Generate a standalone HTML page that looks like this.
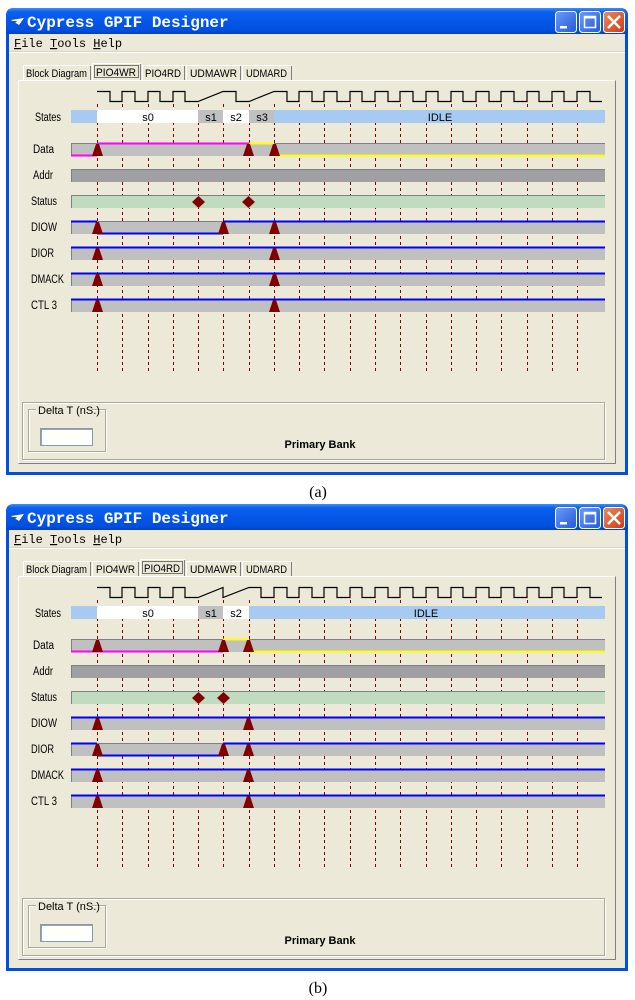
<!DOCTYPE html>
<html><head><meta charset="utf-8"><style>
html,body{margin:0;padding:0;background:#fff;}
svg{display:block;}
.t{font-family:"Liberation Sans",sans-serif;font-size:11px;fill:#000;}
.l{font-family:"Liberation Sans",sans-serif;font-size:11.5px;fill:#000;}
.m{font-family:"Liberation Mono",monospace;font-size:12px;fill:#000;}
.ti{font-family:"Liberation Mono",monospace;font-size:16px;font-weight:bold;fill:#fff;}
.cap{font-family:"Liberation Serif",serif;font-size:16px;fill:#000;}
</style></head><body>
<svg width="635" height="1000" viewBox="0 0 635 1000" xmlns="http://www.w3.org/2000/svg">
<defs>
<linearGradient id="tg" x1="0" y1="0" x2="0" y2="1">
<stop offset="0" stop-color="#3d8ef8"/><stop offset="0.15" stop-color="#0a5fee"/><stop offset="0.85" stop-color="#0050e0"/><stop offset="1" stop-color="#0040c8"/></linearGradient>
<linearGradient id="bg" x1="0" y1="0" x2="1" y2="1"><stop offset="0" stop-color="#6a9cf6"/><stop offset="1" stop-color="#2358d8"/></linearGradient>
<linearGradient id="rg" x1="0" y1="0" x2="1" y2="1"><stop offset="0" stop-color="#f08a60"/><stop offset="1" stop-color="#c83a14"/></linearGradient>
<g id="chrome">
<path d="M6,16 Q6,8 14,8 H620 Q628,8 628,16 V475 H6 Z" fill="#0050e0"/>
<path d="M6,16 Q6,8 14,8 H620 Q628,8 628,16 V34 H6 Z" fill="url(#tg)"/>
<rect x="9" y="34" width="616" height="438" fill="#ece9d8"/>
<path d="M11,20 L24,18 L19,25 Z" fill="#fff"/><path d="M12,21 L17,21 L15,23 Z" fill="#2050c0"/>
<rect x="555.5" y="11.5" width="21" height="21" rx="3" fill="url(#bg)" stroke="#fff"/>
<rect x="560" y="26" width="7" height="2.5" fill="#fff"/>
<rect x="579.5" y="11.5" width="21" height="21" rx="3" fill="url(#bg)" stroke="#fff"/>
<rect x="584.5" y="16.5" width="11" height="11" fill="none" stroke="#fff" stroke-width="1.5"/><rect x="584" y="16" width="12" height="2.5" fill="#fff"/>
<rect x="603.5" y="11.5" width="21" height="21" rx="3" fill="url(#rg)" stroke="#fff"/>
<path d="M608,16 L620,28 M620,16 L608,28" stroke="#fff" stroke-width="2.5"/>
<line x1="9" y1="52.5" x2="625" y2="52.5" stroke="#fff"/>
<line x1="9" y1="51.5" x2="625" y2="51.5" stroke="#d8d4c4"/>
<path d="M18.5,463.5 V80.5 H615.5" fill="none" stroke="#fff"/>
<path d="M615.5,80.5 V463.5 H18.5" fill="none" stroke="#808080"/>
<g stroke="#800000" stroke-dasharray="3,3" stroke-width="1">
<path d="M97.5,104V372 M122.5,104V372 M148.5,104V372 M173.5,104V372 M198.5,104V372 M223.5,104V372 M249.5,104V372 M274.5,104V372 M299.5,104V372 M324.5,104V372 M350.5,104V372 M375.5,104V372 M400.5,104V372 M426.5,104V372 M451.5,104V372 M476.5,104V372 M501.5,104V372 M527.5,104V372 M552.5,104V372 M577.5,104V372"/>
</g>
<g>
<rect x="71" y="143" width="534" height="13" fill="#c0c0c0"/>
<rect x="71" y="169" width="534" height="13" fill="#a0a0a4"/>
<rect x="71" y="195" width="534" height="13" fill="#c0dcc0"/>
<rect x="71" y="221" width="534" height="13" fill="#c0c0c0"/>
<rect x="71" y="247" width="534" height="13" fill="#c0c0c0"/>
<rect x="71" y="273" width="534" height="13" fill="#c0c0c0"/>
<rect x="71" y="299" width="534" height="13" fill="#c0c0c0"/>
<path d="M71.5,156V143.5H605 M71.5,182V169.5H605 M71.5,208V195.5H605 M71.5,234V221.5H605 M71.5,260V247.5H605 M71.5,286V273.5H605 M71.5,312V299.5H605" fill="none" stroke="#808080"/>
</g>
<rect x="23.5" y="403.5" width="582" height="57" fill="none" stroke="#fff"/>
<rect x="22.5" y="402.5" width="582" height="57" fill="none" stroke="#aca899"/>
<rect x="29.5" y="410.5" width="77" height="42" fill="none" stroke="#fff"/>
<rect x="28.5" y="409.5" width="77" height="42" fill="none" stroke="#aca899"/>
<rect x="36" y="405" width="56" height="12" fill="#ece9d8"/>
<rect x="40.5" y="428.5" width="52" height="17" fill="#fff" stroke="#7f9db9"/>
<path d="M41.5,445V429.5H92" fill="none" stroke="#a0a0a0"/>
</g>
</defs>

<!-- ================= (a) ================= -->
<use href="#chrome"/>
<text class="ti" x="27" y="27">Cypress GPIF Designer</text>
<text class="m" x="14" y="47"><tspan text-decoration="underline">F</tspan>ile  <tspan text-decoration="underline">T</tspan>ools  <tspan text-decoration="underline">H</tspan>elp</text>
<path d="M23.5,80V65.5H90.5V80" fill="#ece9d8" stroke="#fff"/><line x1="90.5" y1="66" x2="90.5" y2="80" stroke="#808080"/>
<path d="M92.5,80V63.5H140.5V80" fill="#ece9d8" stroke="#fff"/><line x1="140.5" y1="64" x2="140.5" y2="80" stroke="#808080"/>
<rect x="94.5" y="65.5" width="44" height="12" fill="none" stroke="#000" stroke-dasharray="1,1"/>
<path d="M142.5,80V65.5H184.5V80" fill="#ece9d8" stroke="#fff"/><line x1="184.5" y1="66" x2="184.5" y2="80" stroke="#808080"/>
<path d="M186.5,80V65.5H240.5V80" fill="#ece9d8" stroke="#fff"/><line x1="240.5" y1="66" x2="240.5" y2="80" stroke="#808080"/>
<path d="M242.5,80V65.5H291.5V80" fill="#ece9d8" stroke="#fff"/><line x1="291.5" y1="66" x2="291.5" y2="80" stroke="#808080"/>
<text class="t" x="26" y="77" textLength="61" lengthAdjust="spacingAndGlyphs">Block Diagram</text><text class="t" x="96" y="76" textLength="40" lengthAdjust="spacingAndGlyphs">PIO4WR</text><text class="t" x="145" y="77" textLength="36" lengthAdjust="spacingAndGlyphs">PIO4RD</text><text class="t" x="190" y="77" textLength="47" lengthAdjust="spacingAndGlyphs">UDMAWR</text><text class="t" x="246" y="77" textLength="41" lengthAdjust="spacingAndGlyphs">UDMARD</text>
<path d="M97,91.5 H110 V101.5 H122 V91.5 H135 V101.5 H148 V91.5 H160 V101.5 H173 V91.5 H185 V101.5 H198 L223,91.5 H236 V101.5 H249 L274,91.5 H287 V101.5 H299 V91.5 H312 V101.5 H324 V91.5 H337 V101.5 H350 V91.5 H362 V101.5 H375 V91.5 H388 V101.5 H400 V91.5 H413 V101.5 H426 V91.5 H438 V101.5 H451 V91.5 H463 V101.5 H476 V91.5 H489 V101.5 H501 V91.5 H514 V101.5 H527 V91.5 H539 V101.5 H552 V91.5 H564 V101.5 H577 V91.5 H590 V101.5 H602" fill="none" stroke="#000" stroke-width="1.2"/>
<rect x="71" y="110" width="26" height="13" fill="#a6caf0"/>
<rect x="97" y="110" width="101" height="13" fill="#fff"/>
<rect x="198" y="110" width="25" height="13" fill="#c0c0c0"/>
<rect x="223" y="110" width="26" height="13" fill="#fff"/>
<rect x="249" y="110" width="25" height="13" fill="#c0c0c0"/>
<rect x="274" y="110" width="331" height="13" fill="#a6caf0"/>
<text class="l" x="35" y="121" textLength="26" lengthAdjust="spacingAndGlyphs">States</text>
<text class="t" x="148" y="121" text-anchor="middle">s0</text><text class="t" x="211" y="121" text-anchor="middle">s1</text><text class="t" x="236" y="121" text-anchor="middle">s2</text><text class="t" x="262" y="121" text-anchor="middle">s3</text><text class="t" x="440" y="121" text-anchor="middle">IDLE</text>
<text class="l" x="33" y="153" textLength="21" lengthAdjust="spacingAndGlyphs">Data</text><text class="l" x="33" y="179" textLength="20" lengthAdjust="spacingAndGlyphs">Addr</text><text class="l" x="31" y="205" textLength="26" lengthAdjust="spacingAndGlyphs">Status</text><text class="l" x="31" y="231" textLength="26" lengthAdjust="spacingAndGlyphs">DIOW</text><text class="l" x="31" y="257" textLength="23" lengthAdjust="spacingAndGlyphs">DIOR</text><text class="l" x="31" y="283" textLength="33" lengthAdjust="spacingAndGlyphs">DMACK</text><text class="l" x="31" y="309" textLength="26" lengthAdjust="spacingAndGlyphs">CTL 3</text>
<path d="M71,155.5 H97 M97,143.5 H249" stroke="#ff00ff" stroke-width="2" fill="none"/>
<path d="M249,143.5 H274 M274,155.5 H605" stroke="#ffff00" stroke-width="2" fill="none"/>
<path d="M71,221.5 H97 M97,233.5 H223 M223,221.5 H605 M71,247.5 H605 M71,273.5 H605 M71,299.5 H605" stroke="#0000ff" stroke-width="2" fill="none"/>
<g fill="#800000">
<path d="M92,156 L96,144 H99 L103,156Z M243,156 L247,144 H250 L254,156Z M269,156 L273,144 H276 L280,156Z"/>
<path d="M92,234 L96,222 H99 L103,234Z M218,234 L222,222 H225 L229,234Z M269,234 L273,222 H276 L280,234Z"/>
<path d="M92,260 L96,248 H99 L103,260Z M269,260 L273,248 H276 L280,260Z"/>
<path d="M92,286 L96,274 H99 L103,286Z M269,286 L273,274 H276 L280,286Z"/>
<path d="M92,312 L96,300 H99 L103,312Z M269,312 L273,300 H276 L280,312Z"/>
<path d="M198.5,196 L205,202 L198.5,208 L192,202Z M248.5,196 L255,202 L248.5,208 L242,202Z"/>
</g>
<text class="t" x="38" y="414" font-size="10">Delta T (nS.)</text>
<text class="t" x="320" y="448" text-anchor="middle" font-weight="bold">Primary Bank</text>
<text class="cap" x="318" y="497" text-anchor="middle">(a)</text>

<!-- ================= (b) ================= -->
<g transform="translate(0,496)">
<use href="#chrome"/>
<text class="ti" x="27" y="27">Cypress GPIF Designer</text>
<text class="m" x="14" y="47"><tspan text-decoration="underline">F</tspan>ile  <tspan text-decoration="underline">T</tspan>ools  <tspan text-decoration="underline">H</tspan>elp</text>
<path d="M23.5,80V65.5H90.5V80" fill="#ece9d8" stroke="#fff"/><line x1="90.5" y1="66" x2="90.5" y2="80" stroke="#808080"/>
<path d="M92.5,80V65.5H138.5V80" fill="#ece9d8" stroke="#fff"/><line x1="138.5" y1="66" x2="138.5" y2="80" stroke="#808080"/>
<path d="M140.5,80V63.5H184.5V80" fill="#ece9d8" stroke="#fff"/><line x1="184.5" y1="64" x2="184.5" y2="80" stroke="#808080"/>
<rect x="142.5" y="65.5" width="40" height="12" fill="none" stroke="#000" stroke-dasharray="1,1"/>
<path d="M186.5,80V65.5H240.5V80" fill="#ece9d8" stroke="#fff"/><line x1="240.5" y1="66" x2="240.5" y2="80" stroke="#808080"/>
<path d="M242.5,80V65.5H291.5V80" fill="#ece9d8" stroke="#fff"/><line x1="291.5" y1="66" x2="291.5" y2="80" stroke="#808080"/>
<text class="t" x="26" y="77" textLength="61" lengthAdjust="spacingAndGlyphs">Block Diagram</text><text class="t" x="96" y="77" textLength="39" lengthAdjust="spacingAndGlyphs">PIO4WR</text><text class="t" x="144" y="76" textLength="36" lengthAdjust="spacingAndGlyphs">PIO4RD</text><text class="t" x="190" y="77" textLength="47" lengthAdjust="spacingAndGlyphs">UDMAWR</text><text class="t" x="246" y="77" textLength="41" lengthAdjust="spacingAndGlyphs">UDMARD</text>
<path d="M97,91.5 H110 V101.5 H122 V91.5 H135 V101.5 H148 V91.5 H160 V101.5 H173 V91.5 H185 V101.5 H198 L223,91.5 V101.5 L249,91.5 H261 V101.5 H274 V91.5 H287 V101.5 H299 V91.5 H312 V101.5 H324 V91.5 H337 V101.5 H350 V91.5 H362 V101.5 H375 V91.5 H388 V101.5 H400 V91.5 H413 V101.5 H426 V91.5 H438 V101.5 H451 V91.5 H463 V101.5 H476 V91.5 H489 V101.5 H501 V91.5 H514 V101.5 H527 V91.5 H539 V101.5 H552 V91.5 H564 V101.5 H577 V91.5 H590 V101.5 H602" fill="none" stroke="#000" stroke-width="1.2"/>
<rect x="71" y="110" width="26" height="13" fill="#a6caf0"/>
<rect x="97" y="110" width="101" height="13" fill="#fff"/>
<rect x="198" y="110" width="25" height="13" fill="#c0c0c0"/>
<rect x="223" y="110" width="26" height="13" fill="#fff"/>
<rect x="249" y="110" width="356" height="13" fill="#a6caf0"/>
<text class="l" x="35" y="121" textLength="26" lengthAdjust="spacingAndGlyphs">States</text>
<text class="t" x="148" y="121" text-anchor="middle">s0</text><text class="t" x="211" y="121" text-anchor="middle">s1</text><text class="t" x="236" y="121" text-anchor="middle">s2</text><text class="t" x="426" y="121" text-anchor="middle">IDLE</text>
<text class="l" x="33" y="153" textLength="21" lengthAdjust="spacingAndGlyphs">Data</text><text class="l" x="33" y="179" textLength="20" lengthAdjust="spacingAndGlyphs">Addr</text><text class="l" x="31" y="205" textLength="26" lengthAdjust="spacingAndGlyphs">Status</text><text class="l" x="31" y="231" textLength="26" lengthAdjust="spacingAndGlyphs">DIOW</text><text class="l" x="31" y="257" textLength="23" lengthAdjust="spacingAndGlyphs">DIOR</text><text class="l" x="31" y="283" textLength="33" lengthAdjust="spacingAndGlyphs">DMACK</text><text class="l" x="31" y="309" textLength="26" lengthAdjust="spacingAndGlyphs">CTL 3</text>
<path d="M71,155.5 H223" stroke="#ff00ff" stroke-width="2" fill="none"/>
<path d="M223,143.5 H249 M249,155.5 H605" stroke="#ffff00" stroke-width="2" fill="none"/>
<path d="M71,221.5 H605 M71,247.5 H97 M97,259.5 H223 M223,247.5 H605 M71,273.5 H605 M71,299.5 H605" stroke="#0000ff" stroke-width="2" fill="none"/>
<g fill="#800000">
<path d="M92,156 L96,144 H99 L103,156Z M218,156 L222,144 H225 L229,156Z M243,156 L247,144 H250 L254,156Z"/>
<path d="M92,234 L96,222 H99 L103,234Z M243,234 L247,222 H250 L254,234Z"/>
<path d="M92,260 L96,248 H99 L103,260Z M218,260 L222,248 H225 L229,260Z M243,260 L247,248 H250 L254,260Z"/>
<path d="M92,286 L96,274 H99 L103,286Z M243,286 L247,274 H250 L254,286Z"/>
<path d="M92,312 L96,300 H99 L103,312Z M243,312 L247,300 H250 L254,312Z"/>
<path d="M198.5,196 L205,202 L198.5,208 L192,202Z M223.5,196 L230,202 L223.5,208 L217,202Z"/>
</g>
<text class="t" x="38" y="414" font-size="10">Delta T (nS.)</text>
<text class="t" x="320" y="448" text-anchor="middle" font-weight="bold">Primary Bank</text>
<text class="cap" x="318" y="497" text-anchor="middle">(b)</text>
</g>
</svg>
</body></html>
